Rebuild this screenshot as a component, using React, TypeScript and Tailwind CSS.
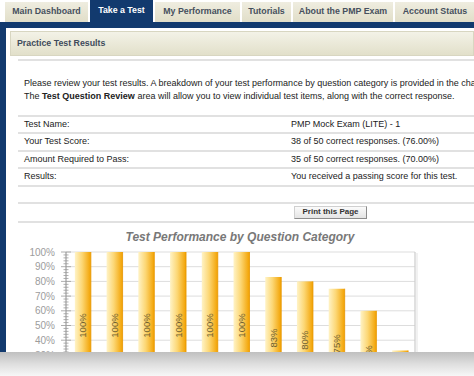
import React from 'react';

const tabs = [
  { label: 'Main Dashboard', w: 'w-[83px]' },
  { label: 'Take a Test', w: 'w-[63px]', active: true },
  { label: 'My Performance', w: 'w-[85px]' },
  { label: 'Tutorials', w: 'w-[49px]' },
  { label: 'About the PMP Exam', w: 'w-[100px]' },
  { label: 'Account Status', w: 'w-[80px]' },
];

const rows = [
  ['Test Name:', 'PMP Mock Exam (LITE) - 1'],
  ['Your Test Score:', '38 of 50 correct responses. (76.00%)'],
  ['Amount Required to Pass:', '35 of 50 correct responses. (70.00%)'],
  ['Results:', 'You received a passing score for this test.'],
];

const scores = [100, 100, 100, 100, 100, 100, 83, 80, 75, 60, 33];

const Rule = () => <div className="ml-[12px] h-[2px] bg-[#e1e1e1]" />;

const Chart: React.FC = () => {
  const x0 = 66;
  const x1 = 415;
  const yZero = 399;
  const k = 1.47;
  const slot = (x1 - x0) / scores.length;
  const grid = [0, 10, 20, 30, 40, 50, 60, 70, 80, 90, 100];
  const minor = Array.from({ length: 51 }, (_, i) => i * 2);

  return (
    <svg width="468" height="130" viewBox="6 223 468 130" className="block">
      <defs>
        <linearGradient id="bar" x1="0" y1="0" x2="1" y2="0">
          <stop offset="0" stopColor="#fff3c6" />
          <stop offset="0.45" stopColor="#fcd775" />
          <stop offset="1" stopColor="#f2a100" />
        </linearGradient>
      </defs>

      <text
        x="240"
        y="241"
        textAnchor="middle"
        fontSize="12"
        fontStyle="italic"
        fontWeight="bold"
        fill="#787878"
        fontFamily="'Liberation Sans', Arial, sans-serif"
      >
        Test Performance by Question Category
      </text>

      {/* grid */}
      {grid.map((p) => (
        <line key={p} x1={x0} x2={x1} y1={yZero - p * k} y2={yZero - p * k} stroke="#dddddd" strokeWidth="1" />
      ))}
      <line x1={x1} x2={x1} y1={252} y2={yZero} stroke="#cccccc" strokeWidth="1.2" />
      <line x1={x1 + 2} x2={x1 + 2} y1={253} y2={yZero} stroke="#ececec" strokeWidth="1.5" />

      {/* y labels */}
      {grid.map((p) => (
        <text
          key={p}
          x="55"
          y={yZero - p * k + 3.6}
          textAnchor="end"
          fontSize="10"
          fill="#9c9c9c"
          fontFamily="'Liberation Sans', Arial, sans-serif"
        >
          {p}%
        </text>
      ))}

      {/* axis */}
      <line x1={x0} x2={x0} y1={252} y2={yZero} stroke="#8a8a8a" strokeWidth="1" />
      {minor.map((p) => (
        <line
          key={p}
          x1={p % 10 === 0 ? 61 : 63.5}
          x2={p % 10 === 0 ? 71 : 68.5}
          y1={yZero - p * k}
          y2={yZero - p * k}
          stroke="#9a9a9a"
          strokeWidth="0.8"
        />
      ))}

      {/* bars */}
      {scores.map((s, i) => {
        const bx = x0 + slot * i + (slot - 16) / 2 + 1;
        const top = yZero - s * k;
        const cx = bx + 8;
        const cy = (top + yZero) / 2;
        return (
          <g key={i}>
            <rect x={bx} y={top} width="16" height={yZero - top} fill="url(#bar)" />
            <line x1={bx + 16} x2={bx + 16} y1={top} y2={yZero} stroke="#e69500" strokeWidth="0.8" />
            <text
              x={cx}
              y={cy}
              transform={`rotate(-90 ${cx} ${cy})`}
              textAnchor="middle"
              dominantBaseline="central"
              fontSize="9.5"
              fill="#6e5f33"
              fontFamily="'Liberation Sans', Arial, sans-serif"
            >
              {s}%
            </text>
          </g>
        );
      })}
    </svg>
  );
};

export default function App() {
  return (
    <div className="w-[474px] h-[376px] overflow-hidden bg-white font-['Liberation_Sans',Arial,sans-serif] text-[9px] text-[#222]">
      <div className="h-[352px] overflow-hidden flex flex-col">
        {/* Tabs */}
        <div className="flex items-end gap-[2px] pl-[5px] h-[22px] shrink-0 text-[8.8px]">
          {tabs.map((t) => (
            <div
              key={t.label}
              className={`${t.w} shrink-0 flex items-center justify-center font-bold whitespace-nowrap ${
                t.active
                  ? 'h-[22px] bg-[#123a6e] text-white'
                  : 'h-[20px] bg-linear-to-b from-[#efede0] to-[#e1dec8] text-[#46505d]'
              }`}
            >
              {t.label}
            </div>
          ))}
        </div>
        <div className="h-[6px] bg-[#123a6e] shrink-0" />

        {/* Content */}
        <div className="flex-1 border-l-[6px] border-[#123a6e] pt-[3px] pl-[4px] overflow-hidden">
          <div className="h-[25px] flex items-center pl-[6px] border border-[#d8d6c1] bg-linear-to-b from-[#f3f2e7] to-[#e2e0ca] font-bold text-[8.8px] text-[#3e4b5b]">
            Practice Test Results
          </div>

          <div className="-ml-[4px] mt-[3px]">
            <Rule />

            <div className="mt-[16px] pl-[18px] leading-[13px] whitespace-nowrap">
              <div>
                Please review your test results. A breakdown of your test performance by question category is provided in the chart below.
              </div>
              <div>
                The <span className="font-bold">Test Question Review</span> area will allow you to view individual test items, along with the correct response.
              </div>
            </div>

            <div className="mt-[12px]">
              {rows.map(([label, value]) => (
                <React.Fragment key={label}>
                  <Rule />
                  <div className="h-[15.4px] flex items-center pl-[18px] whitespace-nowrap">
                    <div className="w-[267px] shrink-0">{label}</div>
                    <div>{value}</div>
                  </div>
                </React.Fragment>
              ))}
              <Rule />
              <div className="h-[15.4px]" />
              <Rule />
              <div className="h-[17px] flex items-center pl-[288px]">
                <button className="w-[73px] h-[13px] flex items-center justify-center font-bold text-[8px] text-[#333] bg-linear-to-b from-[#fbfbfb] to-[#e4e4e4] border border-[#d0d0d0] border-r-[#8c8c8c] border-b-[#8c8c8c]">
                  Print this Page
                </button>
              </div>
              <Rule />
            </div>

            <Chart />
          </div>
        </div>
      </div>
      <div className="h-[24px] bg-linear-to-b from-[#bfbfbf] via-[#dedede] to-[#f7f7f7]" />
    </div>
  );
}
